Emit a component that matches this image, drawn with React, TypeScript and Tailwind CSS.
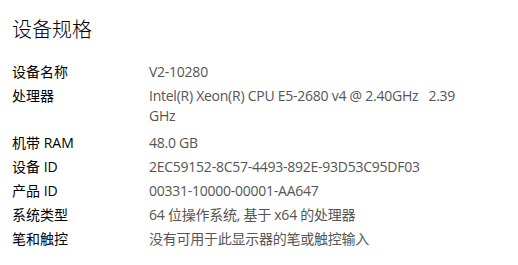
import React from "react";

const rows: [string, string][] = [
  ["设备名称", "V2-10280"],
  ["处理器", "Intel(R) Xeon(R) CPU E5-2680 v4 @ 2.40GHz\u00a0\u00a0 2.39 GHz"],
  ["机带 RAM", "48.0 GB"],
  ["设备 ID", "2EC59152-8C57-4493-892E-93D53C95DF03"],
  ["产品 ID", "00331-10000-00001-AA647"],
  ["系统类型", "64 位操作系统, 基于 x64 的处理器"],
  ["笔和触控", "没有可用于此显示器的笔或触控输入"],
];

export default function App() {
  return (
    <div
      className="w-[518px] h-[265px] bg-white overflow-hidden pl-3 pt-[16px]"
      style={{ fontFamily: '"Open Sans", "Noto Sans CJK SC", sans-serif' }}
    >
      <h1 className="text-[20px] leading-[28px] font-light text-black">设备规格</h1>
      <div className="mt-[18px] flex flex-col gap-[4px]">
        {rows.map(([k, v], i) => (
          <div
            key={k}
            className={`flex text-[14px] leading-[20px] ${i === 1 ? "pb-[3px]" : ""}`}
          >
            <div className="w-[137px] shrink-0 text-black">{k}</div>
            <div className="w-[320px] text-[#555] tracking-[-0.25px]">{v}</div>
          </div>
        ))}
      </div>
    </div>
  );
}
